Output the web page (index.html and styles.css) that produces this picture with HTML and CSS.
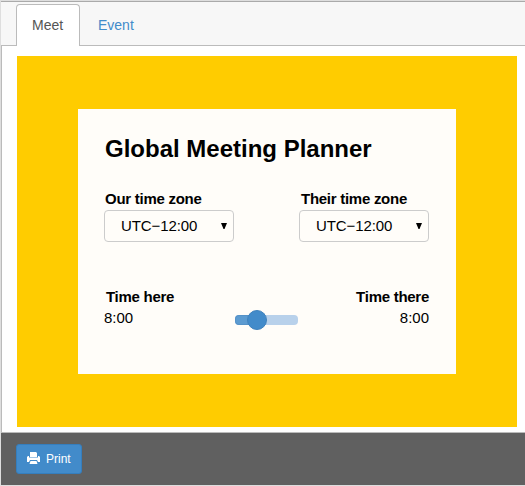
FILE: index.html
```
<!DOCTYPE html>
<html lang="en">
<head>
<meta charset="utf-8">
<title>Global Meeting Planner</title>
<link rel="stylesheet" href="styles.css">
</head>
<body>
<div class="window">
  <nav class="tabs">
    <a class="tab active">Meet</a>
    <a class="tab">Event</a>
  </nav>
  <main class="content">
    <div class="stage">
      <section class="card">
        <h1>Global Meeting Planner</h1>
        <div class="zones">
          <div class="zone">
            <div class="label">Our time zone</div>
            <div class="select"><span>UTC−12:00</span><svg width="6" height="6" viewBox="0 0 6 6"><path d="M0 0h6L3.5 6h-1z"/></svg></div>
          </div>
          <div class="zone">
            <div class="label shifted">Their time zone</div>
            <div class="select"><span>UTC−12:00</span><svg width="6" height="6" viewBox="0 0 6 6"><path d="M0 0h6L3.5 6h-1z"/></svg></div>
          </div>
        </div>
        <div class="times">
          <div class="time">
            <div class="label here">Time here</div>
            <div class="value">8:00</div>
          </div>
          <div class="slider"><div class="fill"></div><div class="thumb"></div></div>
          <div class="time end">
            <div class="label">Time there</div>
            <div class="value">8:00</div>
          </div>
        </div>
      </section>
    </div>
  </main>
  <footer class="footer">
    <button class="print">
      <svg width="13" height="12" viewBox="0 0 13 12"><path fill="#fff" d="M3 0h6l1 1v4H3zM1 4h1v2h9V4h1l1 1v5h-2l-1-2H3l-1 2H0V5zM2 5.5h9V8H2zM3.5 9h6l1 3h-8z"/></svg>
      <span>Print</span>
    </button>
  </footer>
</div>
</body>
</html>
```
FILE: styles.css
```
* { box-sizing: border-box; }
body {
  margin: 0;
  height: 486px;
  padding: 1px 0 1px 1px;
  background: #dedede;
  font: 15px/20px "Liberation Sans", Arial, sans-serif;
  color: #000;
  overflow: hidden;
}
.window { display: flex; flex-direction: column; height: 484px; }
.tabs {
  display: flex;
  height: 45px;
  padding: 2px 0 0 15px;
  background: #f7f7f7;
  border-top: 1px solid #aaa;
  border-bottom: 1px solid #bbb;
}
.tab {
  height: 42px;
  padding: 11px 17px 0 18px;
  font-size: 14px;
  line-height: 20px;
  color: #428bca;
}
.tab.active {
  width: 64px;
  padding: 10px 15px 0;
  background: #fff;
  color: #555;
  border: 1px solid #bbb;
  border-bottom: 0;
  border-radius: 4px 4px 0 0;
}
.content {
  height: 387px;
  padding: 10px 0 0 15px;
  background: #fff;
  border-left: 1px solid #bbb;
  border-bottom: 1px solid #bbb;
}
.stage {
  width: 500px;
  height: 371px;
  padding: 53px 61px;
  background: #fc0;
}
.card {
  width: 378px;
  height: 265px;
  padding: 26px 27px 0 26px;
  background: #fffdf9;
}
h1 { margin: 0 0 26px 1px; font-size: 24px; line-height: 28px; }
.zones, .times { display: flex; justify-content: space-between; }
.zone { width: 130px; }
.label { font-weight: bold; line-height: 20px; letter-spacing: -0.27px; padding-bottom: 1px; }
.zone .label { padding: 0 0 1px 1px; }
.zone .label.shifted { padding-left: 2px; }
.select {
  display: flex;
  align-items: center;
  justify-content: space-between;
  height: 32px;
  padding: 0 6px 0 16px;
  border: 1px solid #ccc;
  border-radius: 4px;
  letter-spacing: -0.1px;
}
.select svg { margin-bottom: 1px; }
.times { margin-top: 45px; }
.time { width: 100px; }
.label.here { padding-left: 2px; }
.end { text-align: right; }
.slider {
  position: relative;
  width: 63px;
  height: 10px;
  margin: 28px 1px 0 0;
  border-radius: 4px;
  background: #b8d1eb;
}
.fill { width: 22px; height: 10px; border-radius: 4px 0 0 4px; background: #5c9bd1; border: 1px solid #5592c8; border-right: 0; }
.thumb {
  position: absolute;
  left: 12px;
  top: -5px;
  width: 20px;
  height: 20px;
  border: 1px solid #4082bd;
  border-radius: 50%;
  background: #428bca;
}
.footer { height: 52px; padding: 11px 15px; background: #606060; }
.print {
  display: flex;
  align-items: center;
  gap: 6px;
  width: 66px;
  height: 30px;
  padding: 0 0 0 10px;
  border: 1px solid #357ebd;
  border-radius: 3px;
  background: #428bca;
  color: #fff;
  font: 12px/18px "Liberation Sans", Arial, sans-serif;
}
.print svg { margin-bottom: 2px; }
```
